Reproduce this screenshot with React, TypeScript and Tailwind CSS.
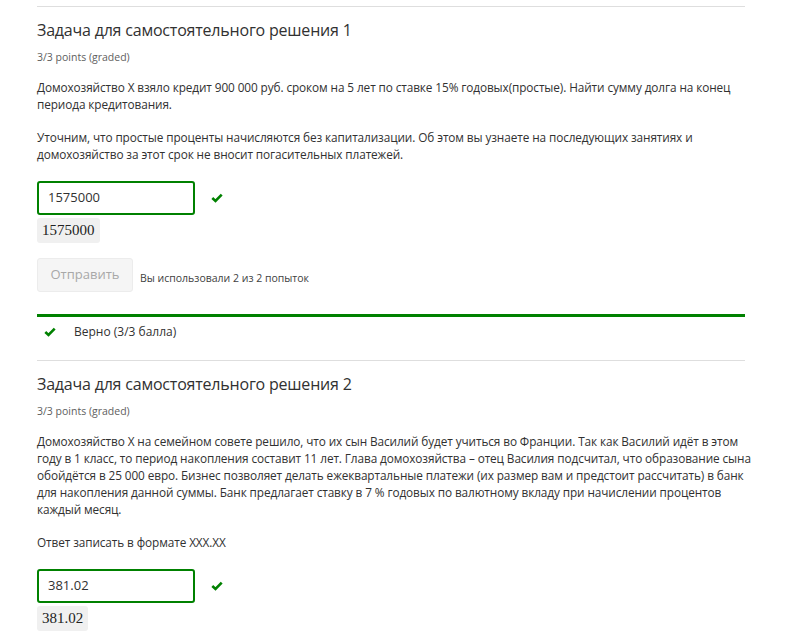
const sans = { fontFamily: '"Open Sans", "Noto Sans", sans-serif' };

const problems = [
	{
		title: 'Задача для самостоятельного решения 1',
		paragraphs: [
			'Домохозяйство X взяло кредит 900 000 руб. сроком на 5 лет по ставке 15% годовых(простые). Найти сумму долга на конец периода кредитования.',
			'Уточним, что простые проценты начисляются без капитализации. Об этом вы узнаете на последующих занятиях и домохозяйство за этот срок не вносит погасительных платежей.',
		],
		answer: '1575000',
		submitted: true,
	},
	{
		title: 'Задача для самостоятельного решения 2',
		paragraphs: [
			'Домохозяйство X на семейном совете решило, что их сын Василий будет учиться во Франции. Так как Василий идёт в этом году в 1 класс, то период накопления составит 11 лет. Глава домохозяйства – отец Василия подсчитал, что образование сына обойдётся в 25 000 евро. Бизнес позволяет делать ежеквартальные платежи (их размер вам и предстоит рассчитать) в банк для накопления данной суммы. Банк предлагает ставку в 7 % годовых по валютному вкладу при начислении процентов каждый месяц.',
			'Ответ записать в формате XXX.XX',
		],
		answer: '381.02',
		submitted: false,
	},
];

function Check({ className = '' }: { className?: string }) {
	return (
		<svg width="12" height="10" viewBox="0 0 12 10" className={className}>
			<polyline points="1.3,5 4.5,8 10.7,1.6" fill="none" stroke="#008100" strokeWidth="2.6" />
		</svg>
	);
}

function Problem({ p }: { p: (typeof problems)[number] }) {
	return (
		<div className="border-t border-[#dedede] pt-[13px]">
			<h3 className="text-[16px] leading-[20px] text-[#313131] tracking-[-0.2px]">{p.title}</h3>
			<div className="mt-[9px] text-[10.5px] leading-[16px] text-[#5e5e5e]">3/3 points (graded)</div>
			<div className="mt-[14px] w-[716px] flex flex-col gap-[16px] text-[11.8px] leading-[17px] text-[#313131] tracking-[-0.1px]">
				{p.paragraphs.map((t) => (
					<p key={t}>{t}</p>
				))}
			</div>
			<div className="mt-[18px] flex items-center">
				<div className="w-[158px] h-[34px] border-2 border-[#008100] rounded-[3px] flex items-center px-[9px] text-[13px] text-[#313131]">
					{p.answer}
				</div>
				<Check className="ml-[16px]" />
			</div>
			<div className="mt-[3px] inline-block bg-[#f0f0f0] rounded-[3px] px-[5px] h-[25px] leading-[25px] text-[15px] text-[#222]" style={{ fontFamily: '"Liberation Serif", serif' }}>
				{p.answer}
			</div>
			{p.submitted && (
				<>
					<div className="mt-[15px] flex items-end gap-[7px]">
						<button disabled className="w-[96px] h-[34px] bg-[#f5f5f5] border border-[#ececec] rounded-[3px] text-[13px] text-[#a8a8a8]" style={sans}>
							Отправить
						</button>
						<span className="text-[10.5px] text-[#414141] mb-[5px]">Вы использовали 2 из 2 попыток</span>
					</div>
					<div className="mt-[22px] border-t-[3px] border-[#008100] h-[46px] flex items-center pl-[7px] pb-[13px]">
						<Check />
						<span className="ml-[18px] text-[12px] text-[#313131]">Верно (3/3 балла)</span>
					</div>
				</>
			)}
		</div>
	);
}

export default function App() {
	return (
		<div className="bg-white min-h-[635px] pt-[6px]" style={sans}>
			<div className="ml-[37px] w-[708px]">
				{problems.map((p) => (
					<Problem key={p.title} p={p} />
				))}
			</div>
		</div>
	);
}
